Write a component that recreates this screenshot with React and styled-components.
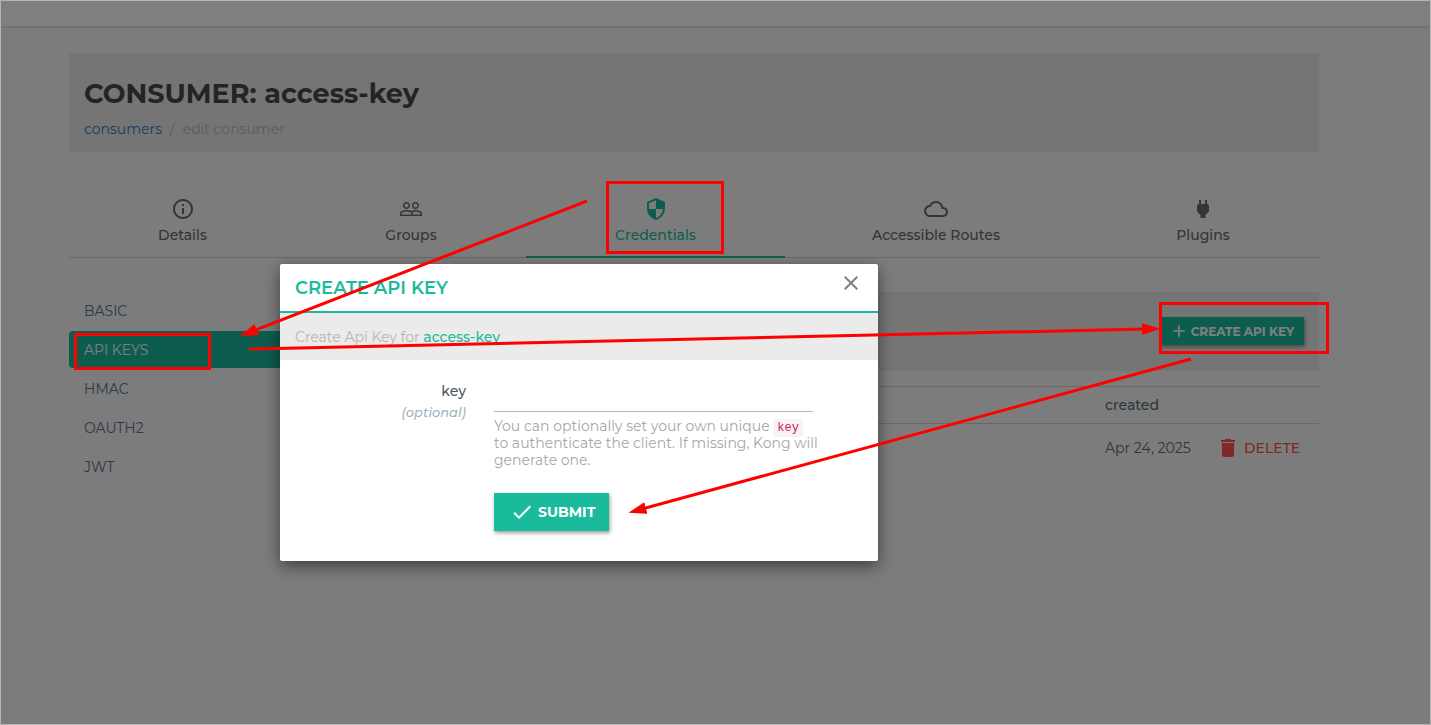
import React from 'react';
import styled, {createGlobalStyle} from "styled-components";
import {MdAdd, MdCheck, MdClose, MdDelete, MdInfoOutline, MdPower, MdOutlineCloud} from "react-icons/md";

const GlobalStyle = createGlobalStyle`
  * {
    box-sizing: border-box;
  }

  body {
    margin: 0;
    background: #f8f8f8;
    font-family: Montserrat, Inter, "Open Sans", sans-serif;
    font-size: 14px;
    line-height: 20px;
    color: #546e7a;
  }

  button, input {
    font-family: inherit;
  }
`;

const Page = styled.div`
  position: relative;
  min-height: 100vh;
  padding-top: 1px;
`;

const TopBar = styled.header`
  height: 27px;
  background: #fefefe;
  border-bottom: 2px solid #e4e4e4;
`;

const Content = styled.main`
  padding: 25px 112px 40px 69px;
`;

const PageHeader = styled.div`
  padding: 20px 15px 13px;
  background: #ebebeb;
`;

const Title = styled.h1`
  margin: 0 0 4px;
  font-size: 27px;
  font-weight: 700;
  line-height: 42px;
  color: #484848;
`;

const Breadcrumb = styled.nav`
  display: flex;
  gap: 8px;
  color: #b8b8b8;

  a {
    color: #337ab7;
    text-decoration: none;
  }
`;

const Tabs = styled.nav`
  display: grid;
  grid-template-columns: 227fr 230fr 259fr 302fr 232fr;
  margin-top: 30px;
  border-bottom: 1px solid #d2d2d2;
`;

const Tab = styled.button`
  display: flex;
  flex-direction: column;
  align-items: center;
  gap: 4px;
  margin-bottom: -1px;
  padding: 15px 0 11px;
  border: 0;
  border-bottom: 2px solid ${({$active}) => $active ? "#1abb9c" : "transparent"};
  background: none;
  color: ${({$active}) => $active ? "#1abb9c" : "#6a6a6a"};
  font-size: 14px;
  font-weight: 500;
  line-height: 20px;
`;

const Columns = styled.div`
  display: flex;
  gap: 30px;
  margin-top: 34px;
`;

const SideNav = styled.nav`
  display: flex;
  flex-direction: column;
  gap: 2px;
  width: 290px;
`;

const SideLink = styled.a`
  padding: 9px 15px 8px;
  border-radius: 4px;
  background: ${({$active}) => $active ? "#1abb9c" : "none"};
  color: ${({$active}) => $active ? "#fff" : "#5a738e"};
  text-decoration: none;
`;

const Pane = styled.section`
  flex: 1;
`;

const Toolbar = styled.div`
  display: flex;
  justify-content: flex-end;
  align-items: flex-start;
  height: 79px;
  padding: 25px 15px;
  background: #ebebeb;
`;

const Button = styled.button`
  display: flex;
  align-items: center;
  gap: ${({$small}) => $small ? "2px" : "4px"};
  height: ${({$small}) => $small ? "28px" : "38px"};
  padding: ${({$small}) => $small ? "0 10px 0 9px" : "0 14px 0 16px"};
  border: 0;
  background: #1abb9c;
  box-shadow: 1px 2px 4px rgba(0, 0, 0, 0.4);
  color: #fff;
  font-size: ${({$small}) => $small ? "12px" : "14px"};
  font-weight: 700;
`;

const KeyTable = styled.table`
  width: 100%;
  margin-top: 15px;
  border-collapse: collapse;

  th, td {
    padding: 8px;
    border-top: 1px solid #d2d2d2;
    text-align: left;
  }

  th {
    font-weight: 500;
  }

  td {
    height: 49px;
  }
`;

const DateCell = styled.td`
  width: 111px;
  white-space: nowrap;
`;

const ActionCell = styled.td`
  width: 111px;
`;

const DeleteButton = styled.button`
  display: flex;
  align-items: center;
  gap: 4px;
  padding: 0;
  border: 0;
  background: none;
  color: #ff5252;
  font-size: 14px;
  font-weight: 500;
`;

const Backdrop = styled.div`
  position: absolute;
  inset: 0;
  display: flex;
  justify-content: center;
  align-items: flex-start;
  padding: 264px 273px 0 0;
  background: rgba(0, 0, 0, 0.5);
`;

const Dialog = styled.div`
  width: 598px;
  border-radius: 2px;
  background: #fff;
  box-shadow: 0 5px 15px rgba(0, 0, 0, 0.5);
`;

const DialogHeader = styled.div`
  display: flex;
  justify-content: space-between;
  align-items: flex-start;
  height: 49px;
  padding: 7px 15px 0;
  border-bottom: 2px solid #1abb9c;

  h2 {
    margin: 0;
    font-size: 18px;
    font-weight: 600;
    line-height: 34px;
    color: #1abb9c;
  }
`;

const CloseButton = styled.button`
  display: flex;
  padding: 0;
  border: 0;
  background: none;
  color: #808080;
`;

const DialogIntro = styled.p`
  margin: 0;
  padding: 14px 15px 13px;
  background: #ebebeb;
  color: #b5b5b5;

  strong {
    font-weight: 500;
    color: #1abb9c;
  }
`;

const Form = styled.form`
  display: grid;
  grid-template-columns: 186px 319px;
  gap: 0 28px;
  padding: 21px 0 30px;
`;

const Label = styled.label`
  text-align: right;
  font-weight: 500;
  color: #455a64;

  em {
    display: block;
    font-size: 13px;
    line-height: 22px;
    color: #9fb3be;
  }
`;

const Field = styled.div`
  display: flex;
  flex-direction: column;
  align-items: flex-start;
`;

const TextInput = styled.input`
  width: 100%;
  height: 31px;
  padding: 0;
  border: 0;
  border-bottom: 1px solid #b5b5b5;
  outline: 0;
`;

const Help = styled.p`
  margin: 6px 0 24px;
  line-height: 17px;
  color: #a7a7a7;
  white-space: nowrap;

  code {
    padding: 2px 4px;
    border-radius: 3px;
    background: #f9f2f4;
    color: #c7254e;
    font-family: "Liberation Mono", monospace;
    font-size: 12px;
    line-height: 12px;
  }
`;

const Frame = styled.div`
  position: absolute;
  inset: 0;
  border: 1px solid #b5b5b5;
  pointer-events: none;
`;

const Annotations = styled.svg`
  position: absolute;
  top: 0;
  left: 0;
  width: 100%;
  height: 100%;
  overflow: visible;
  pointer-events: none;
`;

const PeopleIcon = () => (
  <svg width="24" height="24" viewBox="0 0 24 24" fill="currentColor">
    <path d="M16.5 13c-1.2 0-3.07.34-4.5 1-1.43-.67-3.3-1-4.5-1C5.33 13 1 14.08 1 16.25V19h22v-2.75c0-2.17-4.33-3.25-6.5-3.25zm-4 4.5h-10v-1.25c0-.54 2.56-1.75 5-1.75s5 1.21 5 1.75v1.25zm9 0H14v-1.25c0-.46-.2-.86-.52-1.22.88-.3 1.96-.53 3.02-.53 2.44 0 5 1.21 5 1.75v1.25zM7.5 12c1.93 0 3.5-1.57 3.5-3.5S9.43 5 7.5 5 4 6.57 4 8.5 5.57 12 7.5 12zm0-5.5c1.1 0 2 .9 2 2s-.9 2-2 2-2-.9-2-2 .9-2 2-2zm9 5.5c1.93 0 3.5-1.57 3.5-3.5S18.43 5 16.5 5 13 6.57 13 8.5s1.57 3.5 3.5 3.5zm0-5.5c1.1 0 2 .9 2 2s-.9 2-2 2-2-.9-2-2 .9-2 2-2z"/>
  </svg>
);

// quartered shield, top right and bottom left filled
const ShieldIcon = () => (
  <svg width="24" height="24" viewBox="0 0 24 24" fill="currentColor">
    <path fillRule="evenodd" d="M12 1L3 5v6c0 5.550 3.840 10.740 9 12 5.160-1.260 9-6.450 9-12V5l-9-4zM12 3.200L5 6.300V12h7V3.200zM12 12v8.930c3.720-1.150 6.470-4.820 7-8.930h-7z"/>
  </svg>
);

const tabs = [
  {label: "Details", icon: <MdInfoOutline size={24}/>},
  {label: "Groups", icon: <PeopleIcon/>},
  {label: "Credentials", icon: <ShieldIcon/>, active: true},
  {label: "Accessible Routes", icon: <MdOutlineCloud size={24}/>},
  {label: "Plugins", icon: <MdPower size={24}/>},
];

const credentials = ["BASIC", "API KEYS", "HMAC", "OAUTH2", "JWT"];

const CreateKeyDialog = () => (
  <Dialog role="dialog" aria-labelledby="dialog-title">
    <DialogHeader>
      <h2 id="dialog-title">CREATE API KEY</h2>
      <CloseButton type="button" aria-label="Close"><MdClose size={24}/></CloseButton>
    </DialogHeader>
    <DialogIntro>Create Api Key for <strong>access-key</strong></DialogIntro>
    <Form onSubmit={(e) => e.preventDefault()}>
      <Label htmlFor="key">key<em>(optional)</em></Label>
      <Field>
        <TextInput id="key" type="text"/>
        <Help>
          You can optionally set your own unique <code>key</code><br/>
          to authenticate the client. If missing, Kong will<br/>
          generate one.
        </Help>
        <Button type="submit"><MdCheck size={24}/>SUBMIT</Button>
      </Field>
    </Form>
  </Dialog>
);

const Arrows = () => (
  <Annotations stroke="#ff0000" strokeWidth="3" fill="none">
    <defs>
      <marker id="head" viewBox="0 0 18 12" refX="4" refY="6" markerWidth="18" markerHeight="12" markerUnits="userSpaceOnUse" orient="auto">
        <path d="M0 0L18 6L0 12z" fill="#ff0000" stroke="none"/>
      </marker>
    </defs>
    <rect x="607.5" y="182.5" width="115" height="70"/>
    <rect x="75.5" y="334.5" width="134" height="34"/>
    <rect x="1160.5" y="303.5" width="167" height="49"/>
    <path d="M587 201L253 331" markerEnd="url(#head)"/>
    <path d="M249 349L1146 329" markerEnd="url(#head)"/>
    <path d="M1191 359L642 509" markerEnd="url(#head)"/>
  </Annotations>
);

const App = () => {
  return (
    <Page>
      <GlobalStyle/>
      <TopBar/>
      <Content>
        <PageHeader>
          <Title>CONSUMER: access-key</Title>
          <Breadcrumb>
            <a href="#consumers">consumers</a>
            <span>/</span>
            <span>edit consumer</span>
          </Breadcrumb>
        </PageHeader>
        <Tabs>
          {tabs.map((tab) => (
            <Tab key={tab.label} type="button" $active={tab.active}>
              {tab.icon}
              {tab.label}
            </Tab>
          ))}
        </Tabs>
        <Columns>
          <SideNav>
            {credentials.map((name) => (
              <SideLink key={name} href="#credentials" $active={name === "API KEYS"}>{name}</SideLink>
            ))}
          </SideNav>
          <Pane>
            <Toolbar>
              <Button type="button" $small><MdAdd size={20}/>CREATE API KEY</Button>
            </Toolbar>
            <KeyTable>
              <thead>
                <tr>
                  <th></th>
                  <th>created</th>
                  <th></th>
                </tr>
              </thead>
              <tbody>
                <tr>
                  <td></td>
                  <DateCell>Apr 24, 2025</DateCell>
                  <ActionCell>
                    <DeleteButton type="button"><MdDelete size={24}/>DELETE</DeleteButton>
                  </ActionCell>
                </tr>
              </tbody>
            </KeyTable>
          </Pane>
        </Columns>
      </Content>
      <Backdrop>
        <CreateKeyDialog/>
      </Backdrop>
      <Frame/>
      <Arrows/>
    </Page>
  );
};

export default App;
